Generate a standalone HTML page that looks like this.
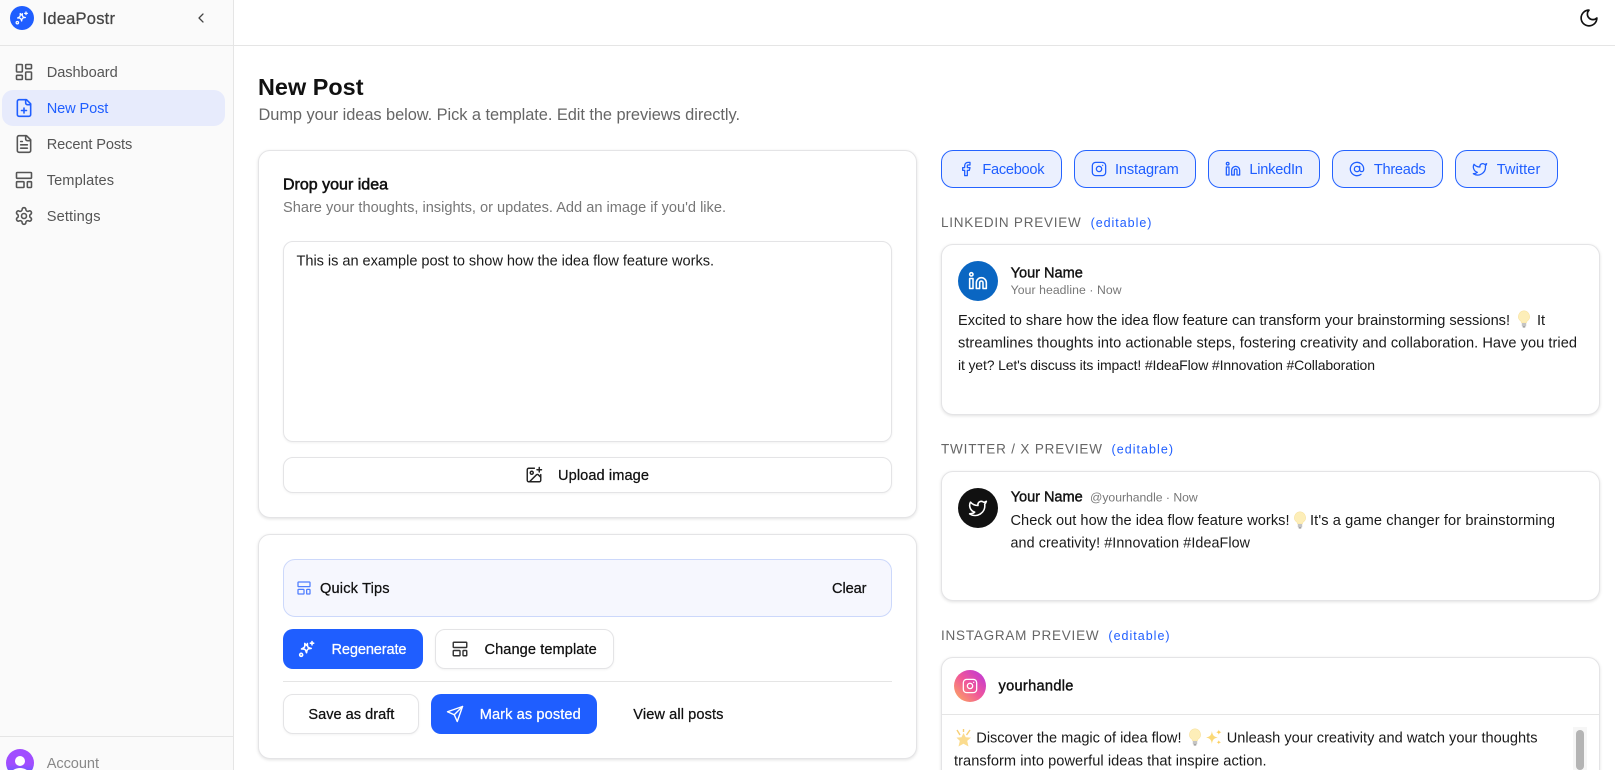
<!DOCTYPE html>
<html lang="en">
<head>
<meta charset="utf-8">
<title>IdeaPostr - New Post</title>
<style>
html,body{margin:0;padding:0;width:1615px;height:770px;overflow:hidden;background:#fff}
body{position:relative;font-family:"Liberation Sans",sans-serif}
.b{position:absolute;box-sizing:border-box}
.card{background:#fff;border:1px solid #e4e4e6;border-radius:12px;box-shadow:0 1px 3px rgba(0,0,0,.12)}
.btn{background:#fff;border:1px solid #e4e4e6;border-radius:10px;box-shadow:0 1px 2px rgba(0,0,0,.05)}
.pri{background:#1f5eff;border-radius:10px}
.chip{background:#ebf0fe;border:1px solid #2563ff;border-radius:12px;top:150px;height:38px}
svg.layer{position:absolute;left:0;top:0;width:1615px;height:770px}
text{font-family:"Liberation Sans",sans-serif;font-size:14.6px;fill:#1a1a1a}
.m{stroke:currentColor;stroke-width:.25px}
.side{fill:#555;color:#555}
.name{fill:#111;color:#111}
.blue{fill:#1f5eff;color:#1f5eff}
.lab{fill:#666;font-size:13.5px}
.ed{fill:#1f5eff;font-size:12.5px}
.sub{fill:#777;font-size:12.2px}
.w{fill:#fff;color:#fff}
.ic{fill:none;stroke-width:1.9;stroke-linecap:round;stroke-linejoin:round}
</style>
</head>
<body>
<div class="b" style="left:0;top:0;width:234px;height:770px;background:#fafafa;border-right:1px solid #e5e5e5"></div>
<div class="b" style="left:0;top:45px;width:1615px;height:1px;background:#e5e5e5"></div>
<div class="b" style="left:0;top:736px;width:234px;height:1px;background:#e5e5e5"></div>
<div class="b" style="left:2px;top:90px;width:223px;height:36px;background:#e7ebfc;border-radius:11px"></div>
<div class="b" style="left:10px;top:6px;width:24px;height:24px;border-radius:50%;background:#1f5eff"></div>

<div class="b card" style="left:258px;top:150px;width:659px;height:368px"></div>
<div class="b" style="left:283px;top:241px;width:609px;height:201px;border:1px solid #e4e4e6;border-radius:10px;box-shadow:0 1px 2px rgba(0,0,0,.06)"></div>
<div class="b btn" style="left:283px;top:457px;width:609px;height:36px"></div>

<div class="b card" style="left:258px;top:534px;width:659px;height:225px"></div>
<div class="b" style="left:283px;top:559px;width:609px;height:58px;background:#f6f7fe;border:1px solid #ccd8fb;border-radius:12px"></div>
<div class="b pri" style="left:283px;top:629px;width:140px;height:40px"></div>
<div class="b btn" style="left:435px;top:629px;width:179px;height:40px"></div>
<div class="b" style="left:283px;top:681px;width:609px;height:1px;background:#e5e5e5"></div>
<div class="b btn" style="left:283px;top:694px;width:136px;height:40px"></div>
<div class="b pri" style="left:431px;top:694px;width:166px;height:40px"></div>

<div class="b chip" style="left:941px;width:121px"></div>
<div class="b chip" style="left:1074px;width:122px"></div>
<div class="b chip" style="left:1208px;width:112px"></div>
<div class="b chip" style="left:1332px;width:111px"></div>
<div class="b chip" style="left:1455px;width:103px"></div>

<div class="b card" style="left:941px;top:244px;width:659px;height:171px"></div>
<div class="b" style="left:958px;top:261px;width:40px;height:40px;border-radius:50%;background:#0a66c2"></div>
<div class="b card" style="left:941px;top:471px;width:659px;height:129.500px"></div>
<div class="b" style="left:958px;top:488px;width:40px;height:40px;border-radius:50%;background:#111"></div>
<div class="b card" style="left:941px;top:657px;width:659px;height:130px"></div>
<div class="b" style="left:954px;top:670px;width:32px;height:32px;border-radius:50%;background:linear-gradient(45deg,#fdb05a 0%,#f0569a 50%,#b935e0 100%)"></div>
<div class="b" style="left:942px;top:714px;width:657px;height:1px;background:#e5e5e5"></div>
<div class="b" style="left:1573px;top:727px;width:14px;height:43px;background:#f6f6f6"></div>
<div class="b" style="left:1576px;top:730px;width:8px;height:40px;border-radius:4px;background:#b4b4b4"></div>

<div class="b" style="left:6px;top:749px;width:28px;height:28px;border-radius:50%;background:linear-gradient(#a04dff 55%,#5a5cff 90%);overflow:hidden">
  <div class="b" style="left:9px;top:7px;width:10px;height:10px;border-radius:50%;background:#fff"></div>
  <div class="b" style="left:5px;top:19px;width:18px;height:12px;border-radius:50%;background:#fff"></div>
</div>

<svg class="layer" viewBox="0 0 1615 770" xmlns="http://www.w3.org/2000/svg">
<defs>
<symbol id="sp" viewBox="0 0 24 24"><path d="M11.500 5.500c.4 2.600 1 3.600 1.400 4s1.700.9 4.100.9c-2.400.8-3.500 1.300-3.900 1.800s-.8 1.800-.7 4.300c-1.200-2.200-1.900-3.200-2.500-3.500s-1.800-.4-4.200.1c2-1.500 2.800-2.400 3.100-3.100s.1-2-.4-4.100c1.500 1.300 2.500 2 3.100 1.900z" transform="rotate(10 12 11)"/><path d="M18 3v4M16 5h4"/><circle cx="5" cy="19" r="1.800"/></symbol>
<symbol id="tpl" viewBox="0 0 24 24"><rect x="3" y="3" width="18" height="7" rx="1"/><rect x="3" y="14" width="9" height="7" rx="1"/><rect x="16" y="14" width="5" height="7" rx="1"/></symbol>
<symbol id="li" viewBox="0 0 24 24"><path d="M16 8a6 6 0 0 1 6 6v7h-4v-7a2 2 0 0 0-2-2 2 2 0 0 0-2 2v7h-4v-7a6 6 0 0 1 6-6z"/><rect x="2" y="9" width="4" height="12"/><circle cx="4" cy="4" r="2"/></symbol>
<symbol id="tw" viewBox="0 0 24 24"><path d="M22 4s-.7 2.100-2 3.400c1.600 10-9.400 17.300-18 11.600 2.200.1 4.400-.6 6-2C3 15.500.5 9.600 3 5c2.200 2.600 5.600 4.100 9 4-.9-4.200 4-6.600 7-3.800 1.100 0 3-1.200 3-1.200z"/></symbol>
<symbol id="ig" viewBox="0 0 24 24"><rect x="2" y="2" width="20" height="20" rx="5"/><path d="M16 11.370A4 4 0 1 1 12.630 8 4 4 0 0 1 16 11.370z"/><path d="M17.500 6.500h.01"/></symbol>
<symbol id="bulb" viewBox="0 0 14 18"><path d="M7 .8a5.800 5.800 0 0 0-3.300 10.400c.6.500.9 1.100.9 1.800h4.800c0-.7.300-1.300.9-1.800A5.800 5.800 0 0 0 7 .8z" fill="#fdeeb8" stroke="#f6dd93" stroke-width=".5"/><rect x="4.800" y="13" width="4.400" height="3.200" fill="#c4c4c4"/><rect x="5.600" y="16.200" width="2.800" height="1.300" rx=".6" fill="#8d8d8d"/></symbol>
<symbol id="spk" viewBox="0 0 16 16"><path d="M6.500 2c.6 4 1.800 5.200 5.500 6-3.700.8-4.900 2-5.500 6-.6-4-1.800-5.200-5.500-6 3.700-.8 4.900-2 5.500-6z" fill="#fbd978"/><path d="M13 .5c.2 1.500.8 2.100 2.500 2.500-1.700.4-2.300 1-2.500 2.500-.2-1.500-.8-2.100-2.500-2.500 1.700-.4 2.300-1 2.500-2.500zM13 10.500c.2 1.200.6 1.600 2 2-1.400.4-1.800.8-2 2-.2-1.200-.6-1.600-2-2 1.400-.4 1.800-.8 2-2z" fill="#fbcf5e"/></symbol>
<symbol id="star" viewBox="0 0 18 18"><path d="M9.500 4l2.200 4.200 5.300.4-3.800 3.300 1.300 5.600-5-2.700-5 2.700 1.300-5.600L2.500 8.600l5-.4z" fill="#fbdc8f"/><path d="M3 1l3 5M16 1l-3.500 5M9.500 0v3" stroke="#f7cf74" stroke-width="1.400"/></symbol>
</defs>

<!-- Sidebar -->
<svg x="14" y="10" width="16" height="16" class="ic" stroke="#fff" stroke-width="1.800"><use href="#sp"/></svg>
<text x="42.500" y="24" textLength="72.500" lengthAdjust="spacing" class="m" style="font-size:16.500px;fill:#444;color:#444">IdeaPostr</text>
<svg x="193" y="10" width="16" height="16" viewBox="0 0 24 24" class="ic" stroke="#444" stroke-width="2"><path d="m15 18-6-6 6-6"/></svg>

<g class="ic" stroke="#555">
<svg x="14" y="62" width="20" height="20" viewBox="0 0 24 24"><rect x="3" y="3" width="7" height="9" rx="1"/><rect x="14" y="3" width="7" height="5" rx="1"/><rect x="14" y="12" width="7" height="9" rx="1"/><rect x="3" y="16" width="7" height="5" rx="1"/></svg>
<svg x="14" y="98" width="20" height="20" viewBox="0 0 24 24" stroke="#1f5eff"><path d="M15 2H6a2 2 0 0 0-2 2v16a2 2 0 0 0 2 2h12a2 2 0 0 0 2-2V7Z"/><path d="M14 2v4a2 2 0 0 0 2 2h4"/><path d="M9 15h6"/><path d="M12 18v-6"/></svg>
<svg x="14" y="134" width="20" height="20" viewBox="0 0 24 24"><path d="M15 2H6a2 2 0 0 0-2 2v16a2 2 0 0 0 2 2h12a2 2 0 0 0 2-2V7Z"/><path d="M14 2v4a2 2 0 0 0 2 2h4"/><path d="M10 9H8"/><path d="M16 13H8"/><path d="M16 17H8"/></svg>
<svg x="14" y="170" width="20" height="20" viewBox="0 0 24 24"><use href="#tpl"/></svg>
<svg x="14" y="206" width="20" height="20" viewBox="0 0 24 24"><path d="M12.220 2h-.44a2 2 0 0 0-2 2v.18a2 2 0 0 1-1 1.730l-.43.25a2 2 0 0 1-2 0l-.15-.08a2 2 0 0 0-2.730.730l-.22.38a2 2 0 0 0 .73 2.730l.15.1a2 2 0 0 1 1 1.720v.51a2 2 0 0 1-1 1.740l-.15.09a2 2 0 0 0-.73 2.730l.22.38a2 2 0 0 0 2.730.730l.15-.08a2 2 0 0 1 2 0l.43.25a2 2 0 0 1 1 1.730V20a2 2 0 0 0 2 2h.44a2 2 0 0 0 2-2v-.18a2 2 0 0 1 1-1.730l.43-.25a2 2 0 0 1 2 0l.15.08a2 2 0 0 0 2.730-.73l.22-.39a2 2 0 0 0-.73-2.730l-.15-.08a2 2 0 0 1-1-1.740v-.5a2 2 0 0 1 1-1.740l.15-.09a2 2 0 0 0 .73-2.730l-.22-.38a2 2 0 0 0-2.730-.73l-.15.08a2 2 0 0 1-2 0l-.43-.25a2 2 0 0 1-1-1.730V4a2 2 0 0 0-2-2z"/><circle cx="12" cy="12" r="3"/></svg>
</g>
<text x="46.700" y="77" textLength="71" class="side">Dashboard</text>
<text x="46.700" y="113" textLength="61.600" class="blue">New Post</text>
<text x="46.700" y="149" textLength="85.600" class="side">Recent Posts</text>
<text x="46.700" y="185" textLength="67.300" class="side">Templates</text>
<text x="46.700" y="221" textLength="53.800" class="side">Settings</text>
<text x="46.700" y="768" textLength="52.300" style="fill:#888">Account</text>

<!-- Header -->
<svg x="1578.500" y="7.500" width="21" height="21" viewBox="0 0 24 24" class="ic" stroke="#111"><path d="M12 3a6 6 0 0 0 9 9 9 9 0 1 1-9-9Z"/></svg>

<!-- Title -->
<text x="258" y="95" textLength="105.500" style="font-size:23.400px;font-weight:700;fill:#111">New Post</text>
<text x="258.500" y="120" textLength="481.500" style="font-size:16.400px;fill:#666">Dump your ideas below. Pick a template. Edit the previews directly.</text>

<!-- Left card -->
<text x="283" y="189.500" textLength="105" class="m name" style="font-size:16px;stroke-width:.55px">Drop your idea</text>
<text x="283" y="212" textLength="443" style="fill:#777">Share your thoughts, insights, or updates. Add an image if you'd like.</text>
<text x="296.500" y="265.500" textLength="417.500">This is an example post to show how the idea flow feature works.</text>
<svg x="525" y="466" width="18" height="18" viewBox="0 0 24 24" class="ic" stroke="#222"><path d="M16 5h6"/><path d="M19 2v6"/><path d="M21 11.500V19a2 2 0 0 1-2 2H5a2 2 0 0 1-2-2V5a2 2 0 0 1 2-2h7.500"/><path d="m21 15-3.086-3.086a2 2 0 0 0-2.828 0L6 21"/><circle cx="9" cy="9" r="2"/></svg>
<text x="558" y="480" textLength="91" class="m name">Upload image</text>

<!-- Actions card -->
<svg x="296" y="580" width="16" height="16" viewBox="0 0 24 24" class="ic" stroke="#4f7dff" stroke-width="2.400"><use href="#tpl"/></svg>
<text x="320" y="593" textLength="69.600" class="m name">Quick Tips</text>
<text x="832" y="593" textLength="34.500" class="m name">Clear</text>
<svg x="297" y="639" width="20" height="20" viewBox="0 0 24 24" class="ic" stroke="#fff" stroke-width="1.800"><use href="#sp"/></svg>
<text x="331.500" y="654" textLength="75" class="m w">Regenerate</text>
<svg x="451" y="640" width="18" height="18" viewBox="0 0 24 24" class="ic" stroke="#333"><use href="#tpl"/></svg>
<text x="484.500" y="654" textLength="112.200" class="m name">Change template</text>
<text x="308.400" y="719" textLength="85.900" class="m name">Save as draft</text>
<svg x="446" y="705" width="18" height="18" viewBox="0 0 24 24" class="ic" stroke="#fff"><path d="m22 2-7 20-4-9-9-4Z"/><path d="M22 2 11 13"/></svg>
<text x="479.700" y="719" textLength="101" class="m w">Mark as posted</text>
<text x="633.300" y="719" textLength="90.100" class="m name">View all posts</text>

<!-- Chips -->
<g class="ic" stroke="#1f5eff">
<svg x="958" y="161" width="16" height="16" viewBox="0 0 24 24"><path d="M18 2h-3a5 5 0 0 0-5 5v3H7v4h3v8h4v-8h3l1-4h-4V7a1 1 0 0 1 1-1h3z"/></svg>
<svg x="1091" y="161" width="16" height="16" viewBox="0 0 24 24"><use href="#ig"/></svg>
<svg x="1225" y="161" width="16" height="16" viewBox="0 0 24 24"><use href="#li"/></svg>
<svg x="1349" y="161" width="16" height="16" viewBox="0 0 24 24"><circle cx="12" cy="12" r="4"/><path d="M16 8v5a3 3 0 0 0 6 0v-1a10 10 0 1 0-4 8"/></svg>
<svg x="1472" y="161" width="16" height="16" viewBox="0 0 24 24"><use href="#tw"/></svg>
</g>
<text x="982.400" y="174" textLength="62.100" class="blue">Facebook</text>
<text x="1115" y="174" textLength="63.800" class="blue">Instagram</text>
<text x="1249.400" y="174" textLength="53.500" class="blue">LinkedIn</text>
<text x="1373.900" y="174" textLength="51.800" class="blue">Threads</text>
<text x="1496.700" y="174" textLength="43.700" class="blue">Twitter</text>

<!-- LinkedIn preview -->
<text x="941" y="227" textLength="139.800" class="lab">LINKEDIN PREVIEW</text>
<text x="1090.600" y="227" textLength="60.800" class="ed">(editable)</text>
<svg x="968" y="271" width="20" height="20" viewBox="0 0 24 24" class="ic" stroke="#fff"><use href="#li"/></svg>
<text x="1010.600" y="277.500" textLength="72.300" class="m name" style="stroke-width:.4px">Your Name</text>
<text x="1010.600" y="294" textLength="111" class="sub">Your headline · Now</text>
<text x="958" y="325" textLength="552">Excited to share how the idea flow feature can transform your brainstorming sessions!</text>
<use href="#bulb" x="1517" y="310" width="14" height="18"/>
<text x="1537" y="325" textLength="8">It</text>
<text x="958" y="347.500" textLength="619">streamlines thoughts into actionable steps, fostering creativity and collaboration. Have you tried</text>
<text x="958" y="370" textLength="417" style="font-size:14px">it yet? Let's discuss its impact! #IdeaFlow #Innovation #Collaboration</text>

<!-- Twitter preview -->
<text x="941" y="453.500" textLength="161" class="lab">TWITTER / X PREVIEW</text>
<text x="1111.500" y="453.500" textLength="61.500" class="ed">(editable)</text>
<svg x="968" y="498" width="20" height="20" viewBox="0 0 24 24" class="ic" stroke="#fff"><use href="#tw"/></svg>
<text x="1010.700" y="501.700" textLength="72" class="m name" style="stroke-width:.4px">Your Name</text>
<text x="1090" y="501.700" textLength="107.700" class="sub">@yourhandle · Now</text>
<text x="1010.500" y="525" textLength="279">Check out how the idea flow feature works!</text>
<use href="#bulb" x="1293" y="511" width="14" height="18"/>
<text x="1310" y="525" textLength="245">It's a game changer for brainstorming</text>
<text x="1010.500" y="547.300" textLength="239.500" style="font-size:14.300px">and creativity! #Innovation #IdeaFlow</text>

<!-- Instagram preview -->
<text x="941" y="640" textLength="157.600" class="lab">INSTAGRAM PREVIEW</text>
<text x="1108.400" y="640" textLength="61.200" class="ed">(editable)</text>
<svg x="962" y="678" width="16" height="16" viewBox="0 0 24 24" class="ic" stroke="#fff"><use href="#ig"/></svg>
<text x="998.500" y="690.700" textLength="74.900" class="m name" style="stroke-width:.4px">yourhandle</text>
<use href="#star" x="954" y="729" width="18" height="18"/>
<text x="976.300" y="742.700" textLength="205.200">Discover the magic of idea flow!</text>
<use href="#bulb" x="1188" y="728" width="14" height="18"/>
<use href="#spk" x="1205" y="729" width="17" height="17"/>
<text x="1226.700" y="742.700" textLength="310.800">Unleash your creativity and watch your thoughts</text>
<text x="954" y="765.700" textLength="312.600">transform into powerful ideas that inspire action.</text>
</svg>
</body>
</html>
